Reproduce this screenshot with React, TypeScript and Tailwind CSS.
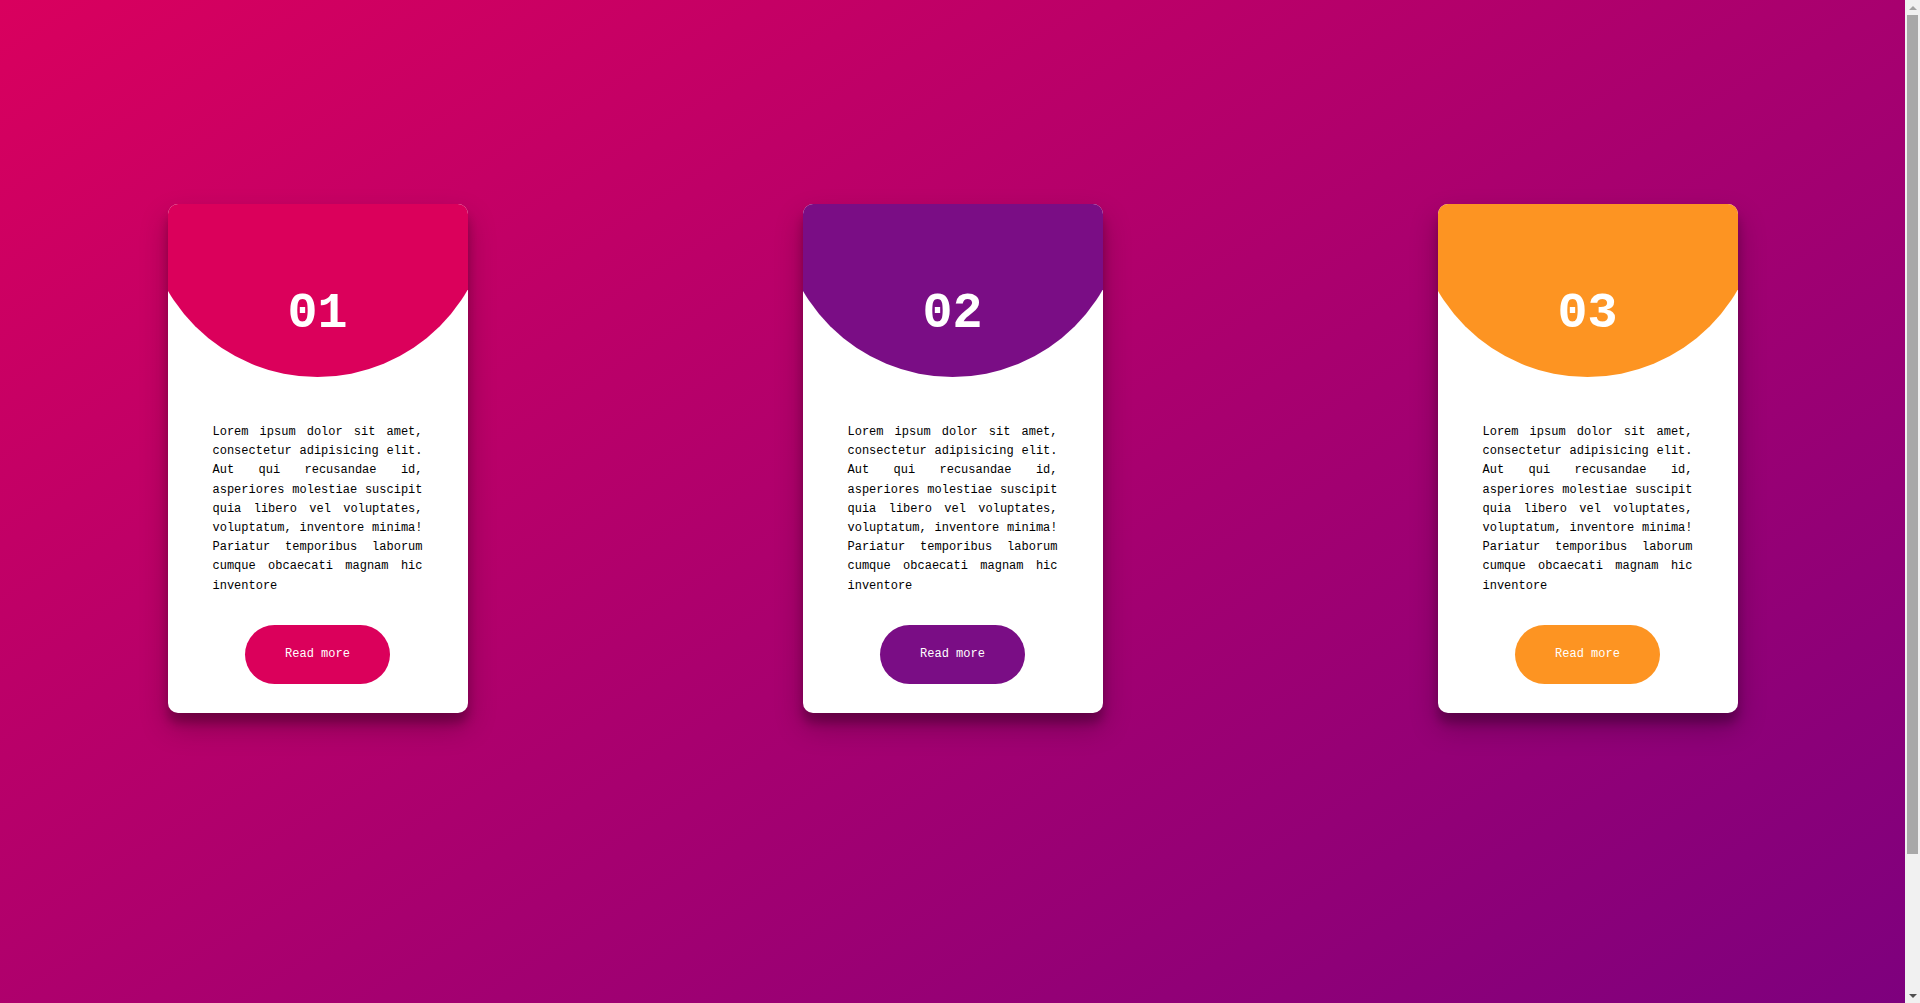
const cards = [
  { num: '01', color: 'bg-[#db005b]' },
  { num: '02', color: 'bg-[#7a0d85]' },
  { num: '03', color: 'bg-[#fd9422]' },
];

const text =
  'Lorem ipsum dolor sit amet, consectetur adipisicing elit. Aut qui recusandae id, asperiores molestiae suscipit quia libero vel voluptates, voluptatum, inventore minima! Pariatur temporibus laborum cumque obcaecati magnam hic inventore';

function Card({ num, color }: { num: string; color: string }) {
  return (
    <div className="flex w-[300px] flex-col items-center overflow-hidden rounded-[10px] bg-white pb-[29px] shadow-[0_14px_28px_rgba(0,0,0,0.25),0_10px_10px_rgba(0,0,0,0.22)]">
      <div
        className={`flex h-[175px] w-full items-center justify-center pt-[45px] [clip-path:circle(173px_at_50%_0)] ${color}`}
      >
        <h2 className="text-[50px] leading-none font-bold text-white">{num}</h2>
      </div>
      <p className="mt-[44px] w-[210px] text-justify text-[12px] leading-[1.6] text-black">{text}</p>
      <a
        href="#"
        className={`mt-[29px] rounded-full px-[40px] py-[20px] text-[12px] leading-[1.6] text-white ${color}`}
      >
        Read more
      </a>
    </div>
  );
}

// fake browser scrollbar, the page is taller than the window
function Scrollbar() {
  return (
    <div className="fixed top-0 right-0 flex h-screen w-[15px] flex-col items-center bg-[#f1f1f1]">
      <div className="flex h-[15px] items-center justify-center">
        <div className="h-0 w-0 border-x-[4px] border-b-[4px] border-x-transparent border-b-[#a3a3a3]" />
      </div>
      <div className="mt-0 h-[839px] w-[11px] bg-[#a8a8a8]" />
      <div className="flex-1" />
      <div className="flex h-[15px] items-center justify-center">
        <div className="h-0 w-0 border-x-[4px] border-t-[4px] border-x-transparent border-t-[#505050]" />
      </div>
    </div>
  );
}

export default function App() {
  return (
    <div className="min-h-[1163px] w-[1905px] bg-[linear-gradient(to_bottom_right,#d9005e,#770080)] pt-[204px] font-['Liberation_Mono',monospace]">
      <div className="flex items-start justify-around">
        {cards.map((c) => (
          <Card key={c.num} num={c.num} color={c.color} />
        ))}
      </div>
      <Scrollbar />
    </div>
  );
}
